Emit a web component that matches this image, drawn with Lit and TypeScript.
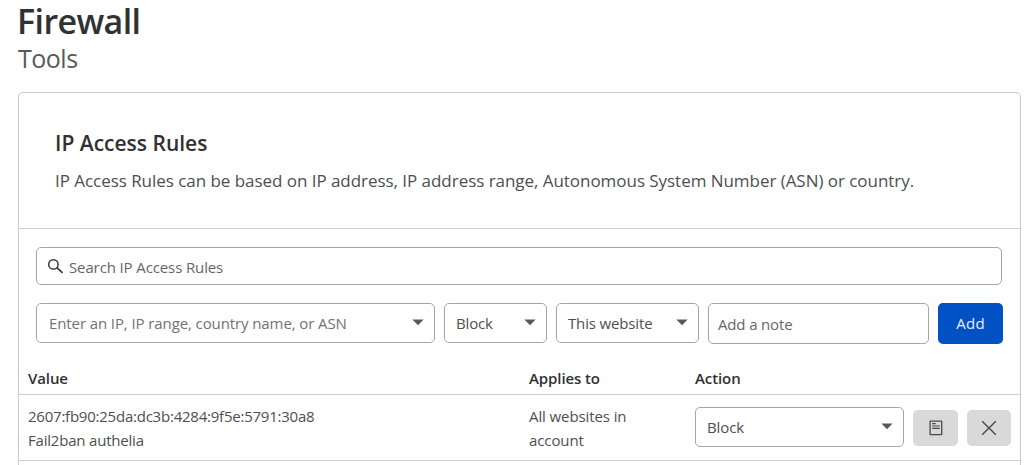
import { LitElement, html, css } from "lit";
import { customElement, property } from "lit/decorators.js";

const caret = html`<svg class="caret" width="12" height="7" viewBox="0 0 12 7"><path d="M.4.5h11.2L6 6.3z" fill="#595959" /></svg>`;

@customElement("select-box")
class SelectBox extends LitElement {
  @property() label = "";

  static styles = css`
    :host {
      display: flex;
      align-items: center;
      justify-content: space-between;
      box-sizing: border-box;
      height: 40px;
      padding: 0 10px 0 11px;
      border: 1px solid #a6a6a6;
      border-radius: 5px;
      background: #fff;
      white-space: nowrap;
    }
    .caret {
      display: block;
      flex: none;
      margin-top: -2px;
    }
    .label {
      padding-bottom: 1px;
    }
  `;

  render() {
    return html`<span class="label">${this.label}</span>${caret}`;
  }
}

@customElement("app-root")
class AppRoot extends LitElement {
  static styles = css`
    :host {
      display: block;
      box-sizing: border-box;
      height: 465px;
      overflow: hidden;
      padding: 0 3px 0 18px;
      background: #fff;
      color: #4d4f50;
      font: 400 15px/24px "Open Sans", "Noto Sans", sans-serif;
    }
    h1, h2, p {
      margin: 0;
    }
    h1 {
      color: #313131;
      font-size: 34px;
      font-weight: 600;
      line-height: 42px;
      letter-spacing: -0.6px;
      margin-left: -1px;
    }
    .subtitle {
      margin-top: -3px;
      color: #595959;
      font-size: 25px;
      line-height: 38px;
      letter-spacing: -0.5px;
    }
    .card {
      height: 400px;
      margin-top: 15px;
      border: 1px solid #c9c9c9;
      border-radius: 5px;
    }
    .intro {
      box-sizing: border-box;
      height: 136px;
      padding: 36px 36px 0;
      border-bottom: 1px solid #cfcfcf;
    }
    h2 {
      color: #313131;
      font-size: 21px;
      font-weight: 600;
      line-height: 28px;
    }
    .intro p {
      margin-top: 11px;
      font-size: 17px;
      line-height: 26px;
      letter-spacing: -0.042px;
      white-space: nowrap;
    }
    .tools {
      padding: 18px 18px 0 17px;
    }
    .search {
      display: flex;
      align-items: center;
      box-sizing: border-box;
      height: 38px;
      padding: 2px 12px 0 10px;
      border: 1px solid #a6a6a6;
      border-radius: 5px;
      color: #666;
      letter-spacing: -0.12px;
    }
    .search svg {
      margin: -1px 5px 0 0;
    }
    .form {
      display: grid;
      grid-template-columns: 399px 103px 143px 221px 65px;
      column-gap: 9px;
      align-items: start;
      margin-top: 18px;
      letter-spacing: -0.15px;
    }
    .target {
      padding-left: 12px;
      color: #727272;
      letter-spacing: -0.1px;
    }
    .note {
      box-sizing: border-box;
      height: 41px;
      padding: 8px 9px 0;
      border: 1px solid #a6a6a6;
      border-radius: 5px;
      color: #666;
    }
    .add {
      height: 41px;
      padding: 0 0 1px;
      border: 0;
      border-radius: 5px;
      background: #0051c3;
      color: #e8f0fb;
      font: inherit;
      letter-spacing: 0.3px;
    }
    .row {
      display: grid;
      grid-template-columns: 500px 167px 1fr;
      padding: 0 9px;
      border-bottom: 1px solid #cfcfcf;
    }
    .head {
      box-sizing: border-box;
      height: 51px;
      padding-top: 22px;
      color: #313131;
      font-weight: 600;
      letter-spacing: -0.1px;
    }
    .rule {
      box-sizing: border-box;
      height: 66px;
      padding-top: 9px;
      letter-spacing: -0.1px;
    }
    .ip {
      letter-spacing: -0.23px;
    }
    .comment {
      letter-spacing: -0.2px;
    }
    .scope {
      padding-left: 1px;
    }
    .actions {
      display: grid;
      grid-template-columns: 209px 45px 44px;
      column-gap: 9px;
      align-items: center;
      height: 40px;
      margin-top: 3px;
    }
    .icon {
      display: flex;
      align-items: center;
      justify-content: center;
      height: 36px;
      margin-top: 1px;
      padding: 0;
      border: 0;
      border-radius: 5px;
      background: #d9d9d9;
    }
  `;

  render() {
    return html`
      <h1>Firewall</h1>
      <div class="subtitle">Tools</div>
      <section class="card">
        <div class="intro">
          <h2>IP Access Rules</h2>
          <p>IP Access Rules can be based on IP address, IP address range, Autonomous System Number (ASN) or country.</p>
        </div>
        <div class="tools">
          <div class="search">
            <svg width="17" height="17" viewBox="0 0 17 17" fill="none" stroke="#36393a">
              <circle cx="6.4" cy="6.4" r="4.7" stroke-width="1.5" />
              <path d="M9.8 9.6l5.8 5.2" stroke-width="1.7" />
            </svg>
            <span>Search IP Access Rules</span>
          </div>
          <div class="form">
            <select-box class="target" label="Enter an IP, IP range, country name, or ASN"></select-box>
            <select-box label="Block"></select-box>
            <select-box label="This website"></select-box>
            <div class="note">Add a note</div>
            <button class="add">Add</button>
          </div>
        </div>
        <div class="row head"><span>Value</span><span class="scope">Applies to</span><span>Action</span></div>
        <div class="row rule">
          <div>
            <div class="ip">2607:fb90:25da:dc3b:4284:9f5e:5791:30a8</div>
            <div class="comment">Fail2ban authelia</div>
          </div>
          <div class="scope">All websites in<br />account</div>
          <div class="actions">
            <select-box label="Block"></select-box>
            <button class="icon" aria-label="Note">
              <svg width="14" height="16" viewBox="0 0 14 16" fill="none" stroke="#4a4a4a">
                <rect x="1.1" y="1.1" width="11.6" height="13.6" rx=".5" stroke-width="1.3" />
                <path d="M3.2 3.7h3.6M3.2 6h7.6M3.2 8.3h7.6" stroke-width="1.2" />
              </svg>
            </button>
            <button class="icon" aria-label="Delete">
              <svg width="16" height="16" viewBox="0 0 16 16" fill="none" stroke="#4a4a4a" stroke-width="1.4">
                <path d="M1.2 1.2l13.6 13.6M14.8 1.2L1.2 14.8" />
              </svg>
            </button>
          </div>
        </div>
      </section>
    `;
  }
}
